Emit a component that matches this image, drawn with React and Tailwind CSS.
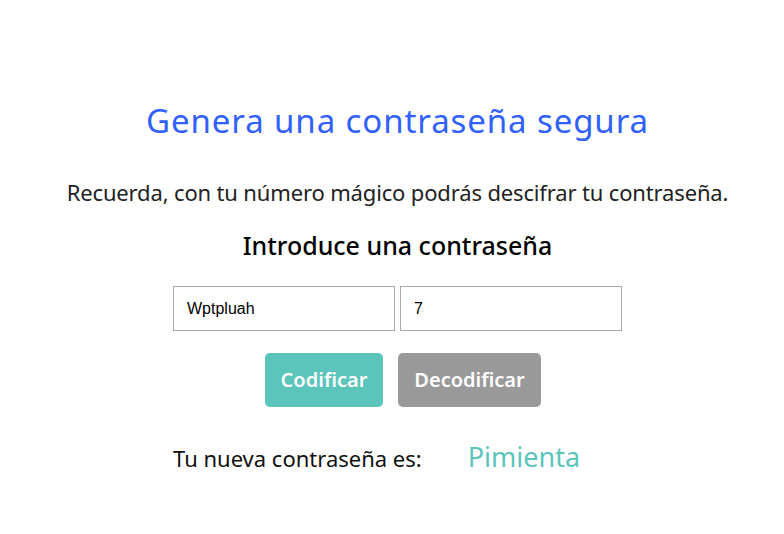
export default function App() {
  const q = { fontFamily: "'Noto Sans', Lato, sans-serif" };
  return (
    <div className="min-h-[534px] w-[784px] bg-white pl-[11px]" style={q}>
      <div className="flex flex-col items-center pt-[99px]">
        <h1 className="text-[33px] leading-[44px] font-normal tracking-[0.9px] text-[#3061ff]">Genera una contraseña segura</h1>
        <p className="mt-[35px] text-[22px] leading-[28px] tracking-[-0.15px] text-[#222]">Recuerda, con tu número mágico podrás descifrar tu contraseña.</p>
        <h2 className="mt-[23px] text-[25px] leading-[32px] font-medium text-black">Introduce una contraseña</h2>
        <div className="mt-[25px] flex gap-[5px]">
          <input
            className="h-[45px] w-[222px] border border-[#a9a9a9] px-[13px] text-[16px] text-black outline-none"
            style={{ fontFamily: "'Liberation Sans', Arial, sans-serif" }}
            defaultValue="Wptpluah"
          />
          <input
            className="h-[45px] w-[222px] border border-[#a9a9a9] px-[13px] text-[16px] text-black outline-none"
            style={{ fontFamily: "'Liberation Sans', Arial, sans-serif" }}
            defaultValue="7"
          />
        </div>
        <div className="mt-[22px] ml-[11px] flex gap-[15px]">
          <button className="h-[54px] w-[118px] rounded-[5px] bg-[#5bc4bb] text-[20px] font-semibold text-white">Codificar</button>
          <button className="h-[54px] w-[143px] rounded-[5px] bg-[#999999] text-[20px] font-semibold text-white">Decodificar</button>
        </div>
        <div className="mt-[30px] flex w-[449px] items-baseline">
          <span className="text-[22px] text-[#111]">Tu nueva contraseña es:</span>
          <span className="ml-[46px] text-[27px] text-[#5bc4bb]">Pimienta</span>
        </div>
      </div>
    </div>
  );
}
